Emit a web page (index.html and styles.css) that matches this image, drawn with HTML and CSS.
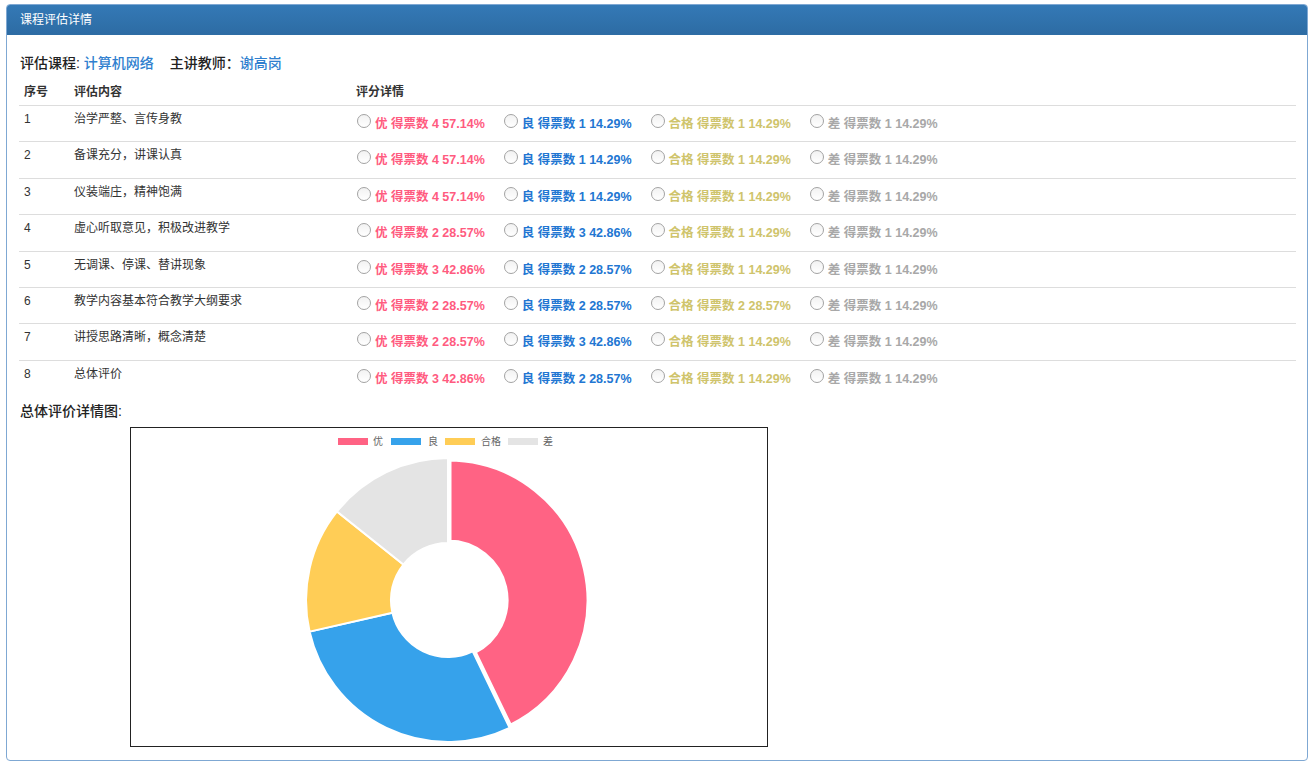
FILE: index.html
```html
<!DOCTYPE html>
<html lang="zh-CN">
<head>
<meta charset="utf-8">
<title>课程评估详情</title>
<link rel="stylesheet" href="styles.css">
</head>
<body>
<div class="panel">
  <div class="panel-heading">课程评估详情</div>
  <div class="panel-body">
    <div class="info"><span class="lbl">评估课程:</span> <a class="link">计算机网络</a><span class="lbl gap">主讲教师：</span><a class="link">谢高岗</a></div>
    <table class="grid">
      <colgroup><col class="c-no"><col class="c-item"><col></colgroup>
      <thead>
        <tr><th>序号</th><th>评估内容</th><th>评分详情</th></tr>
      </thead>
      <tbody>
        <tr><td>1</td><td>治学严整、言传身教</td><td class="rate"><div class="opts">
          <label class="opt you"><input type="radio"><span>优 得票数 4 57.14%</span></label>
          <label class="opt liang"><input type="radio"><span>良 得票数 1 14.29%</span></label>
          <label class="opt hege"><input type="radio"><span>合格 得票数 1 14.29%</span></label>
          <label class="opt cha"><input type="radio"><span>差 得票数 1 14.29%</span></label></div></td></tr>
        <tr><td>2</td><td>备课充分，讲课认真</td><td class="rate"><div class="opts">
          <label class="opt you"><input type="radio"><span>优 得票数 4 57.14%</span></label>
          <label class="opt liang"><input type="radio"><span>良 得票数 1 14.29%</span></label>
          <label class="opt hege"><input type="radio"><span>合格 得票数 1 14.29%</span></label>
          <label class="opt cha"><input type="radio"><span>差 得票数 1 14.29%</span></label></div></td></tr>
        <tr><td>3</td><td>仪装端庄，精神饱满</td><td class="rate"><div class="opts">
          <label class="opt you"><input type="radio"><span>优 得票数 4 57.14%</span></label>
          <label class="opt liang"><input type="radio"><span>良 得票数 1 14.29%</span></label>
          <label class="opt hege"><input type="radio"><span>合格 得票数 1 14.29%</span></label>
          <label class="opt cha"><input type="radio"><span>差 得票数 1 14.29%</span></label></div></td></tr>
        <tr><td>4</td><td>虚心听取意见，积极改进教学</td><td class="rate"><div class="opts">
          <label class="opt you"><input type="radio"><span>优 得票数 2 28.57%</span></label>
          <label class="opt liang"><input type="radio"><span>良 得票数 3 42.86%</span></label>
          <label class="opt hege"><input type="radio"><span>合格 得票数 1 14.29%</span></label>
          <label class="opt cha"><input type="radio"><span>差 得票数 1 14.29%</span></label></div></td></tr>
        <tr><td>5</td><td>无调课、停课、替讲现象</td><td class="rate"><div class="opts">
          <label class="opt you"><input type="radio"><span>优 得票数 3 42.86%</span></label>
          <label class="opt liang"><input type="radio"><span>良 得票数 2 28.57%</span></label>
          <label class="opt hege"><input type="radio"><span>合格 得票数 1 14.29%</span></label>
          <label class="opt cha"><input type="radio"><span>差 得票数 1 14.29%</span></label></div></td></tr>
        <tr><td>6</td><td>教学内容基本符合教学大纲要求</td><td class="rate"><div class="opts">
          <label class="opt you"><input type="radio"><span>优 得票数 2 28.57%</span></label>
          <label class="opt liang"><input type="radio"><span>良 得票数 2 28.57%</span></label>
          <label class="opt hege"><input type="radio"><span>合格 得票数 2 28.57%</span></label>
          <label class="opt cha"><input type="radio"><span>差 得票数 1 14.29%</span></label></div></td></tr>
        <tr><td>7</td><td>讲授思路清晰，概念清楚</td><td class="rate"><div class="opts">
          <label class="opt you"><input type="radio"><span>优 得票数 2 28.57%</span></label>
          <label class="opt liang"><input type="radio"><span>良 得票数 3 42.86%</span></label>
          <label class="opt hege"><input type="radio"><span>合格 得票数 1 14.29%</span></label>
          <label class="opt cha"><input type="radio"><span>差 得票数 1 14.29%</span></label></div></td></tr>
        <tr><td>8</td><td>总体评价</td><td class="rate"><div class="opts">
          <label class="opt you"><input type="radio"><span>优 得票数 3 42.86%</span></label>
          <label class="opt liang"><input type="radio"><span>良 得票数 2 28.57%</span></label>
          <label class="opt hege"><input type="radio"><span>合格 得票数 1 14.29%</span></label>
          <label class="opt cha"><input type="radio"><span>差 得票数 1 14.29%</span></label></div></td></tr>
      </tbody>
    </table>
    <div class="chart-title">总体评价详情图:</div>
    <div class="chart-box">
      <svg class="chart" width="636" height="318" viewBox="0 0 636 318">
        <g class="legend">
          <rect x="206.5" y="9.5" width="31" height="8" fill="#ff6384" stroke="#fff"/>
          <text x="242" y="17">优</text>
          <rect x="259.5" y="9.5" width="31" height="8" fill="#36a2eb" stroke="#fff"/>
          <text x="297" y="17">良</text>
          <rect x="313.5" y="9.5" width="31" height="8" fill="#ffcd56" stroke="#fff"/>
          <text x="350" y="17">合格</text>
          <rect x="376.5" y="9.5" width="31" height="8" fill="#e4e4e4" stroke="#fff"/>
          <text x="412" y="17">差</text>
        </g>
        <g stroke="#fff" stroke-linejoin="miter">
          <path d="M317 30 A142 142 0 0 1 378.6 299.9 L341.7 223.4 A57 57 0 0 0 317 115 Z" fill="#ff6384" stroke-width="7"/>
          <path d="M378.6 299.9 A142 142 0 0 1 178.6 203.6 L261.4 184.7 A57 57 0 0 0 341.7 223.4 Z" fill="#36a2eb" stroke-width="2"/>
          <path d="M178.6 203.6 A142 142 0 0 1 206.0 83.5 L272.4 136.5 A57 57 0 0 0 261.4 184.7 Z" fill="#ffcd56" stroke-width="2"/>
          <path d="M206.0 83.5 A142 142 0 0 1 317 30 L317 115 A57 57 0 0 0 272.4 136.5 Z" fill="#e4e4e4" stroke-width="2"/>
        </g>
      </svg>
    </div>
  </div>
</div>
</body>
</html>
```

FILE: styles.css
```css
* { box-sizing: border-box; }
body {
  margin: 0;
  background: #fff;
  font-family: "Liberation Sans", "Noto Sans CJK SC", sans-serif;
  font-size: 12px;
  color: #333;
}
.panel {
  margin: 4px 8px 0 6px;
  border: 1px solid #7fa8d3;
  border-radius: 4px;
  overflow: hidden;
}
.panel-heading {
  height: 30px;
  line-height: 30px;
  padding: 0 13px;
  color: #fff;
  font-size: 12px;
  background: linear-gradient(#3479b6, #2d6ca4);
  border-bottom: 1px solid #2e6da4;
}
.panel-body {
  padding: 18px 11px 13px 12px;
}
.info {
  font-size: 14px;
  line-height: 20px;
  margin-bottom: 6px;
  padding-left: 1px;
}
.lbl { color: #222; font-weight: 500; }
.gap { margin-left: 16px; }
.link { color: #2f7fcf; text-decoration: none; font-weight: 500; }
.grid {
  width: 100%;
  border-collapse: collapse;
}
.c-no { width: 50px; }
.c-item { width: 282px; }
.grid th {
  text-align: left;
  font-weight: bold;
  padding: 5px 5px 4px;
  line-height: 17px;
  border-bottom: 1px solid #dddddd;
}
.grid td {
  vertical-align: top;
  padding: 5px 5px 0;
  line-height: 17px;
}
.grid tbody tr + tr td { border-top: 1px solid #dddddd; }
.grid td.rate { padding: 8px 5px 0; }
.opts {
  display: flex;
  align-items: flex-start;
  height: 27.4px;
}
.opt {
  display: flex;
  align-items: flex-start;
  margin-right: 18px;
  font-weight: bold;
  font-size: 12.5px;
  white-space: nowrap;
}
.opt input {
  appearance: none;
  -webkit-appearance: none;
  flex: none;
  width: 14px;
  height: 14px;
  margin: 0 4px 0 1px;
  border: 1px solid #a3a3a3;
  border-radius: 50%;
  background: linear-gradient(#f2f2f2, #fff);
}
.opt span { padding-top: 2px; line-height: 17px; }
.you { color: #ff5b7f; }
.liang { color: #2276d2; }
.hege { color: #cfc46c; }
.cha { color: #a8a8a8; }
.chart-title {
  margin-top: 5px;
  font-size: 14px;
  line-height: 20px;
  color: #222;
  font-weight: 500;
  padding-left: 1px;
}
.chart-box {
  margin: 6px 0 0 111px;
  width: 638px;
  height: 320px;
  border: 1px solid #222;
}
.chart { display: block; }
.legend text {
  font-family: "Liberation Sans", "Noto Sans CJK SC", sans-serif;
  font-size: 10px;
  fill: #666;
}
```
